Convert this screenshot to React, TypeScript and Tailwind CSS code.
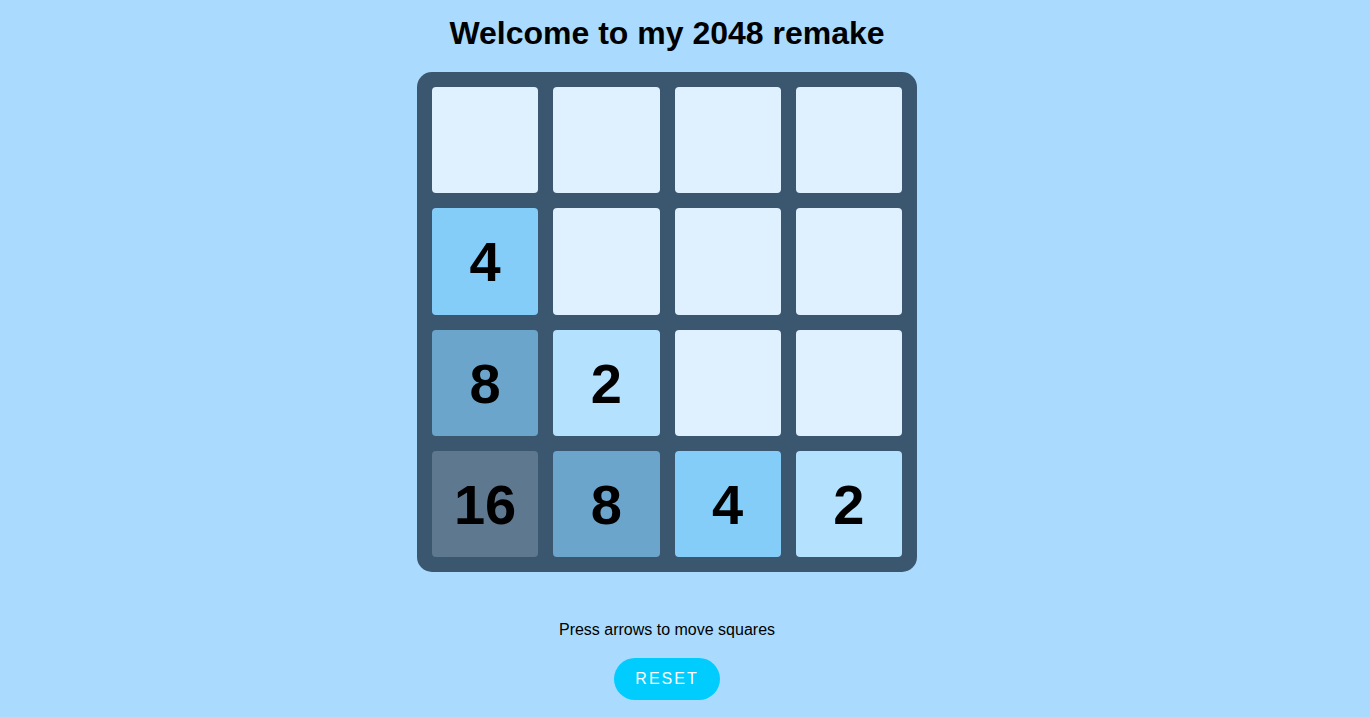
const board: number[][] = [
  [0, 0, 0, 0],
  [4, 0, 0, 0],
  [8, 2, 0, 0],
  [16, 8, 4, 2],
];

function tileClass(value: number) {
  switch (value) {
    case 2:
      return "bg-[#b3e1fe]";
    case 4:
      return "bg-[#84cdf8]";
    case 8:
      return "bg-[#6ca5cb]";
    case 16:
      return "bg-[#5e7890]";
    default:
      return "bg-[#dff0fe]";
  }
}

function Tile({ value }: { value: number }) {
  return (
    <div
      className={`flex items-center justify-center rounded-[4px] pt-[2px] text-[56px] font-bold leading-none text-black ${tileClass(value)}`}
    >
      {value > 0 ? value : ""}
    </div>
  );
}

export default function App() {
  return (
    <div
      className="min-h-[717px] w-full bg-[#aadbfe]"
      style={{ fontFamily: '"Liberation Sans", Arial, sans-serif' }}
    >
      <div className="flex w-[1334px] flex-col items-center">
        <h1 className="mt-[15px] text-[32px] font-bold leading-[37px] text-black">
          Welcome to my 2048 remake
        </h1>
        <div className="mt-[20px] grid h-[500px] w-[500px] grid-cols-4 grid-rows-4 gap-[15px] rounded-[15px] bg-[#3b566f] p-[15px]">
          {board.flat().map((v, i) => (
            <Tile key={i} value={v} />
          ))}
        </div>
        <p className="mt-[49px] text-[16px] leading-[18px] text-black">
          Press arrows to move squares
        </p>
        <button className="mt-[19px] h-[42px] w-[106px] rounded-full bg-[#00ccfe] text-[16px] tracking-[2px] text-white">
          RESET
        </button>
      </div>
    </div>
  );
}
